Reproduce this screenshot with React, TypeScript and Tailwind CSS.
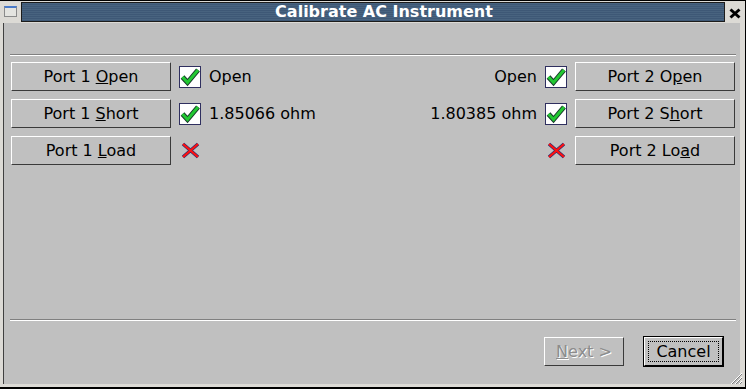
import React from "react"

type Row = {
  left: { pre: string; u: string; post: string; ok: boolean; text: string }
  right: { pre: string; u: string; post: string; ok: boolean; text: string }
}

const rows: Row[] = [
  {
    left: { pre: "Port 1 ", u: "O", post: "pen", ok: true, text: "Open" },
    right: { pre: "Port 2 O", u: "p", post: "en", ok: true, text: "Open" },
  },
  {
    left: { pre: "Port 1 ", u: "S", post: "hort", ok: true, text: "1.85066 ohm" },
    right: { pre: "Port 2 S", u: "h", post: "ort", ok: true, text: "1.80385 ohm" },
  },
  {
    left: { pre: "Port 1 ", u: "L", post: "oad", ok: false, text: "" },
    right: { pre: "Port 2 Lo", u: "a", post: "d", ok: false, text: "" },
  },
]

const raised =
  "bg-[#c0c0c0] border border-t-white border-l-white border-b-[#3a3a3a] border-r-[#3a3a3a] flex items-center justify-center text-[16px] text-black"

function CheckBox() {
  return (
    <div className="w-[22px] h-[22px] bg-white border border-[#2f2f5f] flex items-center justify-center">
      <svg width="20" height="20" viewBox="0 0 20 20">
        <path d="M2.5 10 L7.5 15.5 L18 3" fill="none" stroke="#183a2a" strokeWidth="5" />
        <path d="M2.5 10 L7.5 15.5 L18 3" fill="none" stroke="#22c832" strokeWidth="3" />
      </svg>
    </div>
  )
}

function Cross() {
  return (
    <div className="w-[22px] h-[22px] flex items-center justify-center">
      <svg width="19" height="17" viewBox="0 0 19 17">
        <path d="M2 2 L17 15 M17 2 L2 15" fill="none" stroke="#303070" strokeWidth="3.6" />
        <path d="M2 2 L17 15 M17 2 L2 15" fill="none" stroke="#ff1010" strokeWidth="2.2" />
      </svg>
    </div>
  )
}

function PortButton({ pre, u, post }: { pre: string; u: string; post: string }) {
  return (
    <div className={`${raised} w-[160px] h-[29px]`}>
      <span className="whitespace-pre">
        {pre}
        <span className="underline underline-offset-1">{u}</span>
        {post}
      </span>
    </div>
  )
}

export default function App() {
  return (
    <div className="relative w-[746px] h-[389px] bg-[#dcdad5] border-t border-r border-b-2 border-black flex flex-col font-['DejaVu_Sans',sans-serif]">
      {/* title bar */}
      <div className="h-[22px] flex items-start">
        <div className="ml-[4px] mt-[5px] w-[13px] h-[11px] bg-[#e4e4e0] border border-[#8a8a8a] border-t-2 border-t-[#4a7ac8]" />
        <div className="ml-[4px] mt-[1px] w-[704px] h-[20px] border border-[#1c1c1c] bg-[repeating-linear-gradient(to_bottom,#48637f_0px,#48637f_1px,#3e5876_1px,#3e5876_2px)] flex items-center justify-center pl-[22px]">
          <span className="text-white font-bold text-[16px] leading-none">Calibrate AC Instrument</span>
        </div>
        <div className="ml-[4px] mt-[7px]">
          <svg width="12" height="11" viewBox="0 0 12 11">
            <path d="M1.5 1.5 L10.5 9.5 M10.5 1.5 L1.5 9.5" stroke="#000" strokeWidth="3" />
          </svg>
        </div>
      </div>

      {/* client area */}
      <div className="flex-1 ml-[3px] mr-[5px] mb-[3px] bg-[#c0c0c0] border-l border-[#404040] flex flex-col pl-[6px] pr-[4px] pt-[31px]">
        <div className="border-t border-[#808080] border-b border-b-white" />

        <div className="mt-[6px] flex flex-col gap-[8px] px-[1px]">
          {rows.map((r, i) => (
            <div key={i} className="flex items-center justify-between">
              <div className="flex items-center">
                <PortButton pre={r.left.pre} u={r.left.u} post={r.left.post} />
                <div className="ml-[8px]">{r.left.ok ? <CheckBox /> : <Cross />}</div>
                {r.left.text && <span className="ml-[8px] text-[16px] text-black">{r.left.text}</span>}
              </div>
              <div className="flex items-center">
                {r.right.text && <span className="mr-[8px] text-[16px] text-black">{r.right.text}</span>}
                <div className="mr-[8px]">{r.right.ok ? <CheckBox /> : <Cross />}</div>
                <PortButton pre={r.right.pre} u={r.right.u} post={r.right.post} />
              </div>
            </div>
          ))}
        </div>

        <div className="flex-1" />
        <div className="border-t border-[#808080] border-b border-b-white" />

        <div className="h-[63px] flex items-center justify-end pr-[12px] pb-[2px]">
          <div className={`${raised} w-[80px] h-[29px]`}>
            <span className="text-[#8c8c8c] [text-shadow:1px_1px_0_#ffffff]">
              <span className="underline underline-offset-1">N</span>ext &gt;
            </span>
          </div>
          <div className="ml-[19px] w-[81px] h-[31px] border border-black flex">
            <div className="flex-1 bg-[#c0c0c0] border border-t-white border-l-white border-b-black border-r-black p-[3px] flex">
              <div className="flex-1 border border-dotted border-black flex items-center justify-center text-[16px] text-black">
                Cancel
              </div>
            </div>
          </div>
        </div>
      </div>

      {/* resize grip */}
      <svg className="absolute right-[2px] bottom-[2px]" width="13" height="13" viewBox="0 0 13 13">
        <path d="M12 1 L1 12 M12 5 L5 12 M12 9 L9 12" stroke="#ffffff" strokeWidth="1" />
        <path d="M12 2 L2 12 M12 6 L6 12 M12 10 L10 12" stroke="#808080" strokeWidth="1" />
      </svg>
    </div>
  )
}
